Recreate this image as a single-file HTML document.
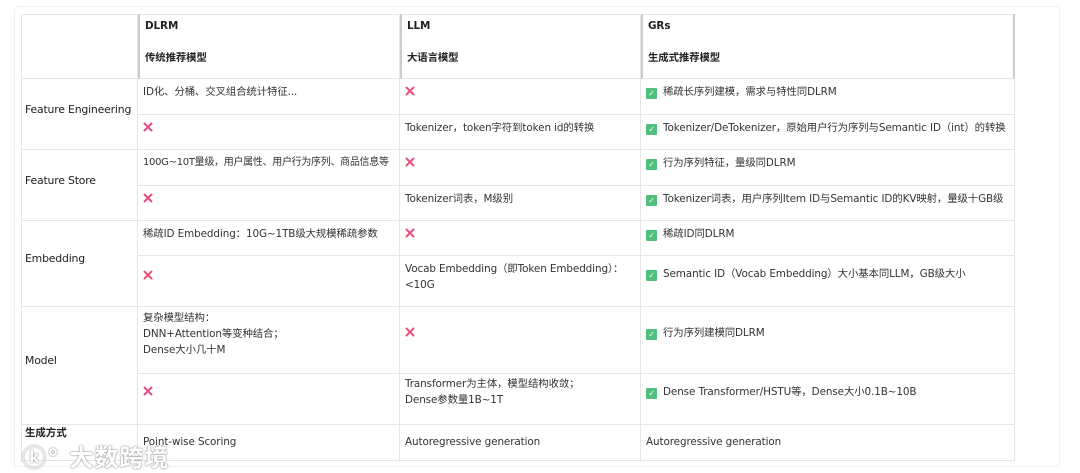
<!DOCTYPE html>
<html><head><meta charset="utf-8"><style>
body{margin:0;width:1080px;height:473px;background:#fff;position:relative;overflow:hidden;font-family:"DejaVu Sans","Noto Sans CJK SC",sans-serif;font-size:10.4px;color:#333}
.frame{position:absolute;left:14px;top:6px;width:1044px;height:459px;border:1px dotted #e4e4e4;border-radius:4px}
.c{position:absolute;box-sizing:border-box;border-right:1px solid #e6e6e6;border-bottom:1px solid #e6e6e6;padding:5px 5px;line-height:16px;white-space:nowrap;letter-spacing:-0.1px}
.l{display:flex;align-items:center;padding-left:4px;padding-bottom:14px;font-size:10.9px;color:#222;letter-spacing:-0.2px}
.x{display:inline-block;vertical-align:-1px}
.ck{display:inline-block;width:11px;height:11px;background:#4fbf7c;border-radius:1px;color:#fff;font-size:8px;line-height:11px;text-align:center;vertical-align:-1px;margin-right:6px}
.h{font-weight:bold;color:#222;padding-top:3px;line-height:18px}
.h span{display:block;margin-top:14px}
.logo{position:absolute;left:22px;top:438px;font-size:24px;color:#fff;font-weight:bold;letter-spacing:1px;text-shadow:0 0 1px #888,0 0 2px #999}
</style></head><body>
<svg width="0" height="0" style="position:absolute"><defs><symbol id="x" viewBox="0 0 10 10"><path d="M1.5 1.5L8.5 8.5M8.5 1.5L1.5 8.5" stroke="#e8507a" stroke-width="2" stroke-linecap="round"/></symbol></defs></svg>
<div class="frame"></div>
<div style="position:absolute;left:21px;top:14px;width:994px;height:447px;border-left:1px solid #e6e6e6;border-top:1px solid #e6e6e6"></div>
<div class="c" style="left:21px;top:14px;width:117px;height:65px"></div>
<div class="c h" style="left:138px;top:14px;width:262px;height:65px;border-left:2px solid #ccc">DLRM<span>传统推荐模型</span></div>
<div class="c h" style="left:400px;top:14px;width:241px;height:65px;border-left:2px solid #ccc">LLM<span>大语言模型</span></div>
<div class="c h" style="left:641px;top:14px;width:374px;height:65px;border-left:2px solid #ccc;border-right:2px solid #ccc">GRs<span>生成式推荐模型</span></div>

<div class="c l" style="left:21px;top:79px;width:117px;height:71px">Feature Engineering</div>
<div class="c" style="left:138px;top:79px;width:262px;height:36px">ID化、分桶、交叉组合统计特征...</div>
<div class="c" style="left:400px;top:79px;width:241px;height:36px"><svg class="x" width="10" height="10"><use href="#x"/></svg></div>
<div class="c" style="left:641px;top:79px;width:374px;height:36px"><span class="ck">✓</span>稀疏长序列建模，需求与特性同DLRM</div>
<div class="c" style="left:138px;top:115px;width:262px;height:35px"><svg class="x" width="10" height="10"><use href="#x"/></svg></div>
<div class="c" style="left:400px;top:115px;width:241px;height:35px">Tokenizer，token字符到token id的转换</div>
<div class="c" style="left:641px;top:115px;width:374px;height:35px"><span class="ck">✓</span>Tokenizer/DeTokenizer，原始用户行为序列与Semantic ID（int）的转换</div>

<div class="c l" style="left:21px;top:150px;width:117px;height:71px">Feature Store</div>
<div class="c" style="left:138px;top:150px;width:262px;height:36px;font-size:10px;letter-spacing:-0.3px">100G~10T量级，用户属性、用户行为序列、商品信息等</div>
<div class="c" style="left:400px;top:150px;width:241px;height:36px"><svg class="x" width="10" height="10"><use href="#x"/></svg></div>
<div class="c" style="left:641px;top:150px;width:374px;height:36px"><span class="ck">✓</span>行为序列特征，量级同DLRM</div>
<div class="c" style="left:138px;top:186px;width:262px;height:35px"><svg class="x" width="10" height="10"><use href="#x"/></svg></div>
<div class="c" style="left:400px;top:186px;width:241px;height:35px">Tokenizer词表，M级别</div>
<div class="c" style="left:641px;top:186px;width:374px;height:35px"><span class="ck">✓</span>Tokenizer词表，用户序列Item ID与Semantic ID的KV映射，量级十GB级</div>

<div class="c l" style="left:21px;top:221px;width:117px;height:86px">Embedding</div>
<div class="c" style="left:138px;top:221px;width:262px;height:35px">稀疏ID Embedding：10G~1TB级大规模稀疏参数</div>
<div class="c" style="left:400px;top:221px;width:241px;height:35px"><svg class="x" width="10" height="10"><use href="#x"/></svg></div>
<div class="c" style="left:641px;top:221px;width:374px;height:35px"><span class="ck">✓</span>稀疏ID同DLRM</div>
<div class="c" style="left:138px;top:256px;width:262px;height:51px;padding-top:12px"><svg class="x" width="10" height="10"><use href="#x"/></svg></div>
<div class="c" style="left:400px;top:256px;width:241px;height:51px">Vocab Embedding（即Token Embedding）：<br>&lt;10G</div>
<div class="c" style="left:641px;top:256px;width:374px;height:51px;padding-top:10px"><span class="ck">✓</span>Semantic ID（Vocab Embedding）大小基本同LLM，GB级大小</div>

<div class="c l" style="left:21px;top:307px;width:117px;height:118px">Model</div>
<div class="c" style="left:138px;top:307px;width:262px;height:67px;padding-top:3px">复杂模型结构：<br>DNN+Attention等变种结合；<br>Dense大小几十M</div>
<div class="c" style="left:400px;top:307px;width:241px;height:67px;padding-top:18px"><svg class="x" width="10" height="10"><use href="#x"/></svg></div>
<div class="c" style="left:641px;top:307px;width:374px;height:67px;padding-top:18px"><span class="ck">✓</span>行为序列建模同DLRM</div>
<div class="c" style="left:138px;top:374px;width:262px;height:51px;padding-top:10px"><svg class="x" width="10" height="10"><use href="#x"/></svg></div>
<div class="c" style="left:400px;top:374px;width:241px;height:51px;padding-top:2px">Transformer为主体，模型结构收敛；<br>Dense参数量1B~1T</div>
<div class="c" style="left:641px;top:374px;width:374px;height:51px;padding-top:10px"><span class="ck">✓</span>Dense Transformer/HSTU等，Dense大小0.1B~10B</div>

<div class="c" style="left:21px;top:425px;width:117px;height:36px;padding:0 4px;font-weight:bold;font-size:10.5px;color:#222">生成方式</div>
<div class="c" style="left:138px;top:425px;width:262px;height:36px;padding-top:9px">Point-wise Scoring</div>
<div class="c" style="left:400px;top:425px;width:241px;height:36px;padding-top:9px">Autoregressive generation</div>
<div class="c" style="left:641px;top:425px;width:374px;height:36px;padding-top:9px">Autoregressive generation</div>
<div class="logo">ⓚ° 大数跨境</div>
</body></html>
